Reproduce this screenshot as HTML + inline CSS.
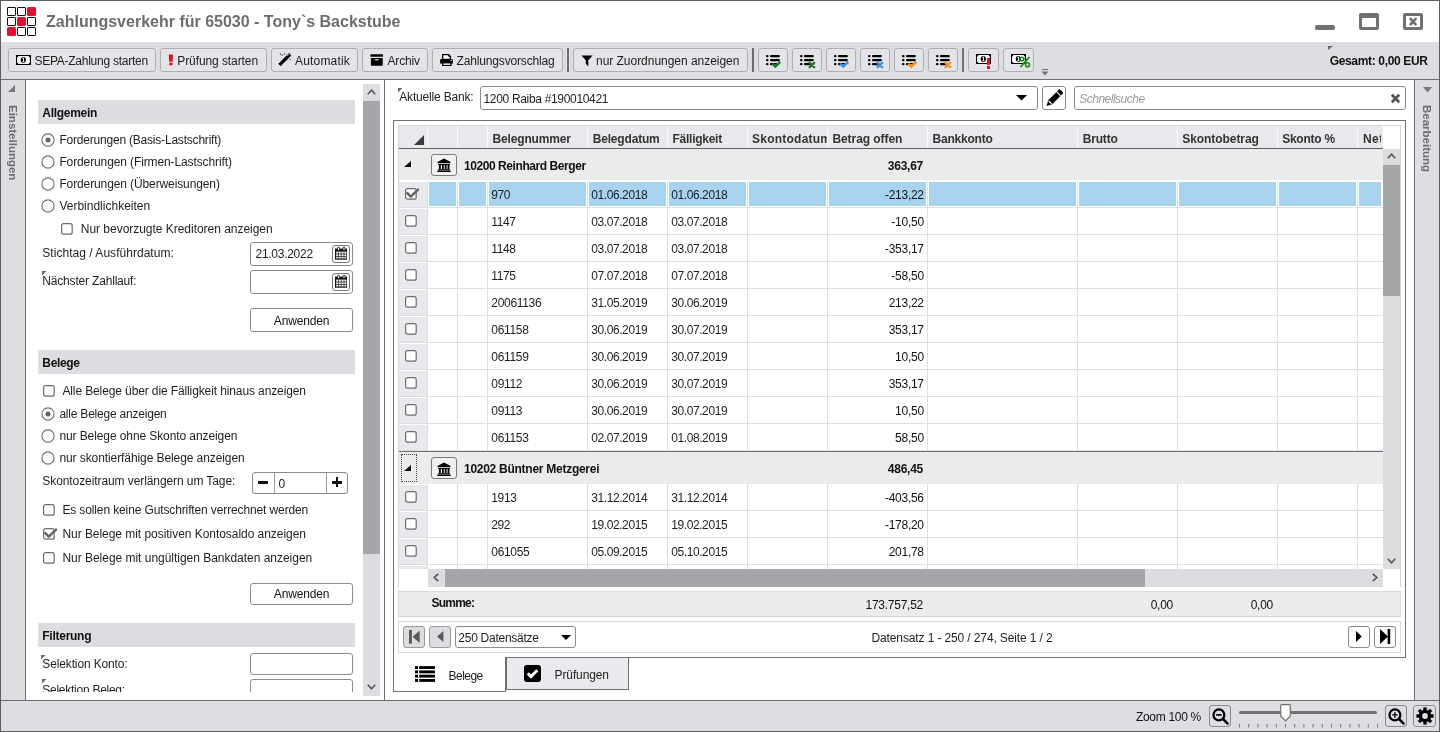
<!DOCTYPE html>
<html><head><meta charset="utf-8"><title>Zahlungsverkehr</title>
<style>
html,body{margin:0;padding:0;}
body{width:1440px;height:732px;position:relative;overflow:hidden;background:#fff;font-family:"Liberation Sans", sans-serif;}
.t{position:absolute;white-space:nowrap;font-size:12px;letter-spacing:-0.26px;line-height:14px;font-family:"Liberation Sans", sans-serif;}
svg{display:block;}
</style></head><body>
<div id="root" style="position:absolute;left:0;top:0;width:1440px;height:732px;overflow:hidden;will-change:transform;">
<div style="position:absolute;left:0px;top:0px;width:1440px;height:732px;background:#fff;"></div>
<div style="position:absolute;left:7px;top:7px;width:9px;height:9px;box-sizing:border-box;border:1.6px solid #111;background:#fff;border-radius:1px;"></div>
<div style="position:absolute;left:17px;top:7px;width:9px;height:9px;box-sizing:border-box;border:1.6px solid #111;background:#fff;border-radius:1px;"></div>
<div style="position:absolute;left:27px;top:7px;width:9px;height:9px;background:#e0102f;border-radius:1.5px;"></div>
<div style="position:absolute;left:7px;top:17px;width:9px;height:9px;box-sizing:border-box;border:1.6px solid #111;background:#fff;border-radius:1px;"></div>
<div style="position:absolute;left:17px;top:17px;width:9px;height:9px;background:#e0102f;border-radius:1.5px;"></div>
<div style="position:absolute;left:27px;top:17px;width:9px;height:9px;box-sizing:border-box;border:1.6px solid #111;background:#fff;border-radius:1px;"></div>
<div style="position:absolute;left:7px;top:27px;width:9px;height:9px;background:#e0102f;border-radius:1.5px;"></div>
<div style="position:absolute;left:17px;top:27px;width:9px;height:9px;box-sizing:border-box;border:1.6px solid #111;background:#fff;border-radius:1px;"></div>
<div style="position:absolute;left:27px;top:27px;width:9px;height:9px;box-sizing:border-box;border:1.6px solid #111;background:#fff;border-radius:1px;"></div>
<div class="t" style="left:46px;top:15.06px;font-size:16px;font-weight:bold;color:#6c6d70;letter-spacing:0px;">Zahlungsverkehr für 65030 - Tony`s Backstube</div>
<div style="position:absolute;left:1315px;top:25px;width:20px;height:5px;background:#707174;border-radius:2px;"></div>
<div style="position:absolute;left:1359px;top:13px;width:20px;height:17px;box-sizing:border-box;border:3px solid #707174;border-top-width:5px;border-radius:2px;"></div>
<div style="position:absolute;left:1403px;top:13px;width:20px;height:17px;box-sizing:border-box;border:3px solid #707174;border-radius:2px;"></div>
<svg style="position:absolute;left:1408px;top:17px" width="10" height="9" viewBox="0 0 10 9"><path d="M2.6 1.9 L7.6 7.3 M7.6 1.9 L2.6 7.3" stroke="#707174" stroke-width="2.7" stroke-linecap="round"/></svg>
<div style="position:absolute;left:0px;top:42px;width:1440px;height:37px;background:#dddee1;"></div>
<div style="position:absolute;left:0px;top:79px;width:1440px;height:1px;background:#6f7072;"></div>
<div style="position:absolute;left:8px;top:48px;width:148px;height:24px;box-sizing:border-box;border:1px solid #aeafb2;border-radius:3px;background:#e3e4e7;"></div>
<svg style="position:absolute;left:16px;top:55px" width="15" height="10" viewBox="0 0 15 10"><rect x="0" y="0" width="15" height="10" fill="#000"/><path d="M2.6 1.1 H12.4 L13.9 2.6 V7.4 L12.4 8.9 H2.6 L1.1 7.4 V2.6 Z" fill="#fff"/><ellipse cx="7.3" cy="4.9" rx="2.6" ry="2.9" fill="#000"/><path d="M6.3 3.4 L7.5 2.9 V6.6 M6.4 6.6 H8.5" stroke="#fff" stroke-width="0.9" fill="none"/></svg>
<div class="t" style="left:34.4px;top:53.84px;font-size:12px;color:#1e1e1e;letter-spacing:-0.253px;">SEPA-Zahlung starten</div>
<div style="position:absolute;left:160px;top:48px;width:107px;height:24px;box-sizing:border-box;border:1px solid #aeafb2;border-radius:3px;background:#e3e4e7;"></div>
<svg style="position:absolute;left:168px;top:53.5px" width="6" height="12" viewBox="0 0 6 12"><path d="M0.8 0.4 H5 L4.6 7.7 H1.2 Z" fill="#e0101f"/><rect x="1.3" y="8.7" width="3.2" height="2.6" fill="#d0101f"/></svg>
<div class="t" style="left:177.25px;top:53.84px;font-size:12px;color:#1e1e1e;letter-spacing:-0.087px;">Prüfung starten</div>
<div style="position:absolute;left:271px;top:48px;width:87px;height:24px;box-sizing:border-box;border:1px solid #aeafb2;border-radius:3px;background:#e3e4e7;"></div>
<svg style="position:absolute;left:278px;top:52px" width="14" height="14" viewBox="0 0 14 14"><path d="M2.6 11.8 L11 3.4" stroke="#000" stroke-width="3.3" stroke-linecap="square"/><path d="M9.3 3.9 L10.8 2.4" stroke="#fff" stroke-width="0.9"/><path d="M2.4 1.4 V2.8 M3.4 3 H5.2 M6.6 1.2 V2.4 M12.3 7 V8.2" stroke="#222" stroke-width="0.8"/></svg>
<div class="t" style="left:295px;top:53.84px;font-size:12px;color:#1e1e1e;letter-spacing:0.174px;">Automatik</div>
<div style="position:absolute;left:362px;top:48px;width:66px;height:24px;box-sizing:border-box;border:1px solid #aeafb2;border-radius:3px;background:#e3e4e7;"></div>
<svg style="position:absolute;left:370px;top:54px" width="13" height="12" viewBox="0 0 13 12"><rect x="0.4" y="0.2" width="12.6" height="2.6" rx="0.5" fill="#000"/><rect x="0.9" y="4" width="11.8" height="7.7" rx="0.4" fill="#000"/><rect x="4.8" y="5.2" width="4" height="1.1" rx="0.5" fill="#fff"/></svg>
<div class="t" style="left:387.5px;top:53.84px;font-size:12px;color:#1e1e1e;letter-spacing:-0.169px;">Archiv</div>
<div style="position:absolute;left:432px;top:48px;width:131px;height:24px;box-sizing:border-box;border:1px solid #aeafb2;border-radius:3px;background:#e3e4e7;"></div>
<svg style="position:absolute;left:440px;top:54px" width="13" height="12" viewBox="0 0 13 12"><path d="M2.7 0.7 H8.6 L10.4 2.5 V5.5 H2.7 Z" fill="#fff" stroke="#000" stroke-width="1.3"/><path d="M8.4 0.5 V2.8 H10.6 Z" fill="#000"/><rect x="0.1" y="5" width="12.8" height="4.7" rx="1" fill="#000"/><rect x="2.7" y="8.8" width="8.2" height="2.7" fill="#fff" stroke="#000" stroke-width="1.3"/><circle cx="11.3" cy="6.4" r="0.6" fill="#fff"/></svg>
<div class="t" style="left:456.5px;top:53.84px;font-size:12px;color:#1e1e1e;letter-spacing:-0.155px;">Zahlungsvorschlag</div>
<div style="position:absolute;left:567px;top:48px;width:2px;height:24px;background:#6f7072;"></div>
<div style="position:absolute;left:573px;top:48px;width:175px;height:24px;box-sizing:border-box;border:1px solid #aeafb2;border-radius:3px;background:#e3e4e7;"></div>
<svg style="position:absolute;left:580.5px;top:54.5px" width="12" height="12" viewBox="0 0 12 12"><path d="M0.4 0.4 H11.6 L7.3 5.2 V11.6 L4.8 8.6 V5.2 Z" fill="#000"/></svg>
<div class="t" style="left:596px;top:53.84px;font-size:12px;color:#1e1e1e;letter-spacing:-0.032px;">nur Zuordnungen anzeigen</div>
<div style="position:absolute;left:752px;top:48px;width:2px;height:24px;background:#6f7072;"></div>
<div style="position:absolute;left:758px;top:48px;width:30px;height:24px;box-sizing:border-box;border:1px solid #aeafb2;border-radius:3px;background:#e3e4e7;"></div>
<svg style="position:absolute;left:766px;top:54px" width="18" height="16" viewBox="0 0 18 16"><rect x="0" y="1" width="2.5" height="2.2" rx="1" fill="#000"/><rect x="4" y="1" width="9.8" height="2.2" rx="1" fill="#000"/><rect x="0" y="5" width="2.5" height="2.2" rx="1" fill="#000"/><rect x="4" y="5" width="9.8" height="2.2" rx="1" fill="#000"/><rect x="0" y="9" width="2.5" height="2.2" rx="1" fill="#000"/><rect x="4" y="9" width="7" height="2.2" rx="1" fill="#000"/><path d="M6.3 9.6 L9.3 12.6 L14.3 7.9" stroke="#1f7a1f" stroke-width="2.4" fill="none" stroke-linejoin="miter"/><path d="M7 10 L9.3 13.2 L12.5 10 Z" fill="#1f7a1f"/></svg>
<div style="position:absolute;left:792px;top:48px;width:30px;height:24px;box-sizing:border-box;border:1px solid #aeafb2;border-radius:3px;background:#e3e4e7;"></div>
<svg style="position:absolute;left:800px;top:54px" width="18" height="16" viewBox="0 0 18 16"><rect x="0" y="1" width="2.5" height="2.2" rx="1" fill="#000"/><rect x="4" y="1" width="9.8" height="2.2" rx="1" fill="#000"/><rect x="0" y="5" width="2.5" height="2.2" rx="1" fill="#000"/><rect x="4" y="5" width="9.8" height="2.2" rx="1" fill="#000"/><rect x="0" y="9" width="2.5" height="2.2" rx="1" fill="#000"/><rect x="4" y="9" width="7" height="2.2" rx="1" fill="#000"/><path d="M9.6 8.9 L14.2 13.2 M14.2 8.9 L9.6 13.2" stroke="#1f7a1f" stroke-width="2.3" stroke-linecap="round"/></svg>
<div style="position:absolute;left:826px;top:48px;width:30px;height:24px;box-sizing:border-box;border:1px solid #aeafb2;border-radius:3px;background:#e3e4e7;"></div>
<svg style="position:absolute;left:834px;top:54px" width="18" height="16" viewBox="0 0 18 16"><rect x="0" y="1" width="2.5" height="2.2" rx="1" fill="#000"/><rect x="4" y="1" width="9.8" height="2.2" rx="1" fill="#000"/><rect x="0" y="5" width="2.5" height="2.2" rx="1" fill="#000"/><rect x="4" y="5" width="9.8" height="2.2" rx="1" fill="#000"/><rect x="0" y="9" width="2.5" height="2.2" rx="1" fill="#000"/><rect x="4" y="9" width="7" height="2.2" rx="1" fill="#000"/><path d="M6.3 9.6 L9.3 12.6 L14.3 7.9" stroke="#3b8ee8" stroke-width="2.4" fill="none" stroke-linejoin="miter"/><path d="M7 10 L9.3 13.2 L12.5 10 Z" fill="#3b8ee8"/></svg>
<div style="position:absolute;left:860px;top:48px;width:30px;height:24px;box-sizing:border-box;border:1px solid #aeafb2;border-radius:3px;background:#e3e4e7;"></div>
<svg style="position:absolute;left:868px;top:54px" width="18" height="16" viewBox="0 0 18 16"><rect x="0" y="1" width="2.5" height="2.2" rx="1" fill="#000"/><rect x="4" y="1" width="9.8" height="2.2" rx="1" fill="#000"/><rect x="0" y="5" width="2.5" height="2.2" rx="1" fill="#000"/><rect x="4" y="5" width="9.8" height="2.2" rx="1" fill="#000"/><rect x="0" y="9" width="2.5" height="2.2" rx="1" fill="#000"/><rect x="4" y="9" width="7" height="2.2" rx="1" fill="#000"/><path d="M9.6 8.9 L14.2 13.2 M14.2 8.9 L9.6 13.2" stroke="#3b8ee8" stroke-width="2.3" stroke-linecap="round"/></svg>
<div style="position:absolute;left:894px;top:48px;width:30px;height:24px;box-sizing:border-box;border:1px solid #aeafb2;border-radius:3px;background:#e3e4e7;"></div>
<svg style="position:absolute;left:902px;top:54px" width="18" height="16" viewBox="0 0 18 16"><rect x="0" y="1" width="2.5" height="2.2" rx="1" fill="#000"/><rect x="4" y="1" width="9.8" height="2.2" rx="1" fill="#000"/><rect x="0" y="5" width="2.5" height="2.2" rx="1" fill="#000"/><rect x="4" y="5" width="9.8" height="2.2" rx="1" fill="#000"/><rect x="0" y="9" width="2.5" height="2.2" rx="1" fill="#000"/><rect x="4" y="9" width="7" height="2.2" rx="1" fill="#000"/><path d="M6.3 9.6 L9.3 12.6 L14.3 7.9" stroke="#f0901e" stroke-width="2.4" fill="none" stroke-linejoin="miter"/><path d="M7 10 L9.3 13.2 L12.5 10 Z" fill="#f0901e"/></svg>
<div style="position:absolute;left:928px;top:48px;width:30px;height:24px;box-sizing:border-box;border:1px solid #aeafb2;border-radius:3px;background:#e3e4e7;"></div>
<svg style="position:absolute;left:936px;top:54px" width="18" height="16" viewBox="0 0 18 16"><rect x="0" y="1" width="2.5" height="2.2" rx="1" fill="#000"/><rect x="4" y="1" width="9.8" height="2.2" rx="1" fill="#000"/><rect x="0" y="5" width="2.5" height="2.2" rx="1" fill="#000"/><rect x="4" y="5" width="9.8" height="2.2" rx="1" fill="#000"/><rect x="0" y="9" width="2.5" height="2.2" rx="1" fill="#000"/><rect x="4" y="9" width="7" height="2.2" rx="1" fill="#000"/><path d="M9.6 8.9 L14.2 13.2 M14.2 8.9 L9.6 13.2" stroke="#f0901e" stroke-width="2.3" stroke-linecap="round"/></svg>
<div style="position:absolute;left:962px;top:48px;width:2px;height:24px;background:#6f7072;"></div>
<div style="position:absolute;left:968px;top:48px;width:31px;height:24px;box-sizing:border-box;border:1px solid #aeafb2;border-radius:3px;background:#e3e4e7;"></div>
<svg style="position:absolute;left:976px;top:54px" width="15" height="10" viewBox="0 0 15 10"><rect x="0" y="0" width="15" height="10" fill="#000"/><path d="M2.6 1.1 H12.4 L13.9 2.6 V7.4 L12.4 8.9 H2.6 L1.1 7.4 V2.6 Z" fill="#fff"/><ellipse cx="7.3" cy="4.9" rx="2.6" ry="2.9" fill="#000"/><path d="M6.3 3.4 L7.5 2.9 V6.6 M6.4 6.6 H8.5" stroke="#fff" stroke-width="0.9" fill="none"/></svg>
<div style="position:absolute;left:986.5px;top:58px;width:3.5px;height:6.5px;background:#e8102a;"></div>
<div style="position:absolute;left:987px;top:66px;width:3px;height:2.5px;background:#e8102a;"></div>
<div style="position:absolute;left:1003px;top:48px;width:31px;height:24px;box-sizing:border-box;border:1px solid #aeafb2;border-radius:3px;background:#e3e4e7;"></div>
<svg style="position:absolute;left:1011px;top:54px" width="15" height="10" viewBox="0 0 15 10"><rect x="0" y="0" width="15" height="10" fill="#000"/><path d="M2.6 1.1 H12.4 L13.9 2.6 V7.4 L12.4 8.9 H2.6 L1.1 7.4 V2.6 Z" fill="#fff"/><ellipse cx="7.3" cy="4.9" rx="2.6" ry="2.9" fill="#000"/><path d="M6.3 3.4 L7.5 2.9 V6.6 M6.4 6.6 H8.5" stroke="#fff" stroke-width="0.9" fill="none"/></svg>
<svg style="position:absolute;left:1019px;top:56px" width="12" height="12" viewBox="0 0 12 12"><path d="M1.5 11 L10.5 1" stroke="#1a8a1a" stroke-width="1.8"/><circle cx="3" cy="3" r="1.8" fill="none" stroke="#1a8a1a" stroke-width="1.5"/><circle cx="8.5" cy="8.8" r="2" fill="none" stroke="#1a8a1a" stroke-width="1.6"/></svg>
<div style="position:absolute;left:1042px;top:69px;width:6px;height:1.2px;background:#707174;"></div>
<svg style="position:absolute;left:1041px;top:71px" width="8" height="5" viewBox="0 0 8 5"><path d="M0.5 0.5 H7.5 L4 4.5 Z" fill="#707174"/></svg>
<svg style="position:absolute;left:1328px;top:46px" width="5" height="4" viewBox="0 0 5 4"><path d="M0 0 H5 L0 4 Z" fill="#6a6a6a"/></svg>
<div class="t" style="left:1329.7px;top:53.84px;font-size:12px;font-weight:bold;color:#111;letter-spacing:-0.339px;">Gesamt: 0,00 EUR</div>
<div style="position:absolute;left:0px;top:80px;width:25px;height:620px;background:#dddee1;"></div>
<div style="position:absolute;left:25px;top:80px;width:1px;height:620px;background:#6f7072;"></div>
<svg style="position:absolute;left:8px;top:85px" width="7" height="7" viewBox="0 0 7 7"><path d="M7 0 V7 H0 Z" fill="#77787b"/></svg>
<div class="t" style="left:17.8px;top:104.5px;font-size:11.5px;font-weight:bold;color:#6c6d70;transform-origin:0 0;transform:rotate(90deg);line-height:11px;letter-spacing:0px;">Einstellungen</div>
<div style="position:absolute;left:38px;top:100px;width:317px;height:24px;background:#dcdde1;"></div>
<div class="t" style="left:42.3px;top:105.64px;font-size:12px;font-weight:bold;color:#111;letter-spacing:-0.299px;">Allgemein</div>
<svg style="position:absolute;left:41.3px;top:132.5px" width="14" height="14" viewBox="0 0 14 14"><circle cx="7" cy="7" r="6.1" fill="#fff" stroke="#6e6e6e" stroke-width="1.1"/><circle cx="7" cy="7" r="2.5" fill="#666"/></svg>
<div class="t" style="left:59.4px;top:132.84px;font-size:12px;color:#1e1e1e;letter-spacing:-0.203px;">Forderungen (Basis-Lastschrift)</div>
<svg style="position:absolute;left:41.3px;top:154.5px" width="14" height="14" viewBox="0 0 14 14"><circle cx="7" cy="7" r="6.1" fill="#fff" stroke="#6e6e6e" stroke-width="1.1"/></svg>
<div class="t" style="left:59.4px;top:154.84px;font-size:12px;color:#1e1e1e;letter-spacing:-0.115px;">Forderungen (Firmen-Lastschrift)</div>
<svg style="position:absolute;left:41.3px;top:176.5px" width="14" height="14" viewBox="0 0 14 14"><circle cx="7" cy="7" r="6.1" fill="#fff" stroke="#6e6e6e" stroke-width="1.1"/></svg>
<div class="t" style="left:59.4px;top:176.84px;font-size:12px;color:#1e1e1e;letter-spacing:-0.113px;">Forderungen (Überweisungen)</div>
<svg style="position:absolute;left:41.3px;top:198.5px" width="14" height="14" viewBox="0 0 14 14"><circle cx="7" cy="7" r="6.1" fill="#fff" stroke="#6e6e6e" stroke-width="1.1"/></svg>
<div class="t" style="left:59.4px;top:198.64px;font-size:12px;color:#1e1e1e;letter-spacing:0.004px;">Verbindlichkeiten</div>
<svg style="position:absolute;left:60px;top:221.6px" width="16.8" height="13.8" viewBox="0 0 16.8 13.8"><rect x="1.6" y="1.6" width="10.600000000000001" height="10.600000000000001" rx="2" fill="#fff" stroke="#6c6c6c" stroke-width="1.2"/></svg>
<div class="t" style="left:80.8px;top:221.54px;font-size:12px;color:#1e1e1e;letter-spacing:-0.027px;">Nur bevorzugte Kreditoren anzeigen</div>
<div class="t" style="left:42.3px;top:245.94px;font-size:12px;color:#1e1e1e;letter-spacing:0.033px;">Stichtag / Ausführdatum:</div>
<div style="position:absolute;left:250px;top:242px;width:103px;height:24px;box-sizing:border-box;border:1px solid #8c8c8c;border-radius:3px;background:#fff;"></div>
<div class="t" style="left:255.5px;top:247.44px;font-size:12px;color:#1e1e1e;letter-spacing:-0.278px;">21.03.2022</div>
<div style="position:absolute;left:332px;top:245px;width:18px;height:18px;box-sizing:border-box;border:1px solid #777;border-radius:3px;background:#fff;"></div>
<svg style="position:absolute;left:334.8px;top:246.2px" width="12.5" height="13.5" viewBox="0 0 12.5 13.5"><rect x="0.6" y="3.2" width="11.3" height="9.9" fill="#fff" stroke="#111" stroke-width="1.2"/><rect x="0.6" y="3" width="11.3" height="2.6" fill="#111"/><rect x="2.5" y="1.2" width="2" height="3.4" rx="1" fill="#fff" stroke="#111" stroke-width="0.9"/><rect x="8" y="1.2" width="2" height="3.4" rx="1" fill="#fff" stroke="#111" stroke-width="0.9"/><path d="M1 8 H11.5 M1 10.5 H11.5 M3.4 5.5 V13 M6.2 5.5 V13 M9 5.5 V13" stroke="#222" stroke-width="0.75"/></svg>
<svg style="position:absolute;left:42px;top:271px" width="5" height="5" viewBox="0 0 5 5"><path d="M0 0 H4.5 L0 4.5 Z" fill="#6a6a6a"/></svg>
<div class="t" style="left:42.3px;top:273.84px;font-size:12px;color:#1e1e1e;letter-spacing:-0.182px;">Nächster Zahllauf:</div>
<div style="position:absolute;left:250px;top:270px;width:103px;height:24px;box-sizing:border-box;border:1px solid #8c8c8c;border-radius:3px;background:#fff;"></div>
<div style="position:absolute;left:332px;top:273px;width:18px;height:18px;box-sizing:border-box;border:1px solid #777;border-radius:3px;background:#fff;"></div>
<svg style="position:absolute;left:334.8px;top:274.2px" width="12.5" height="13.5" viewBox="0 0 12.5 13.5"><rect x="0.6" y="3.2" width="11.3" height="9.9" fill="#fff" stroke="#111" stroke-width="1.2"/><rect x="0.6" y="3" width="11.3" height="2.6" fill="#111"/><rect x="2.5" y="1.2" width="2" height="3.4" rx="1" fill="#fff" stroke="#111" stroke-width="0.9"/><rect x="8" y="1.2" width="2" height="3.4" rx="1" fill="#fff" stroke="#111" stroke-width="0.9"/><path d="M1 8 H11.5 M1 10.5 H11.5 M3.4 5.5 V13 M6.2 5.5 V13 M9 5.5 V13" stroke="#222" stroke-width="0.75"/></svg>
<div style="position:absolute;left:250px;top:308px;width:103px;height:24px;box-sizing:border-box;border:1px solid #8c8c8c;border-radius:3px;background:#fff;"></div>
<div class="t" style="left:273.8px;top:313.84px;font-size:12px;color:#111;letter-spacing:-0.160px;">Anwenden</div>
<div style="position:absolute;left:38px;top:350px;width:317px;height:24px;background:#dcdde1;"></div>
<div class="t" style="left:42.3px;top:355.64px;font-size:12px;font-weight:bold;color:#111;letter-spacing:-0.328px;">Belege</div>
<svg style="position:absolute;left:41.9px;top:383.5px" width="16.8" height="13.8" viewBox="0 0 16.8 13.8"><rect x="1.6" y="1.6" width="10.600000000000001" height="10.600000000000001" rx="2" fill="#fff" stroke="#6c6c6c" stroke-width="1.2"/></svg>
<div class="t" style="left:62.4px;top:383.84px;font-size:12px;color:#1e1e1e;letter-spacing:-0.114px;">Alle Belege über die Fälligkeit hinaus anzeigen</div>
<svg style="position:absolute;left:41.3px;top:406.8px" width="14" height="14" viewBox="0 0 14 14"><circle cx="7" cy="7" r="6.1" fill="#fff" stroke="#6e6e6e" stroke-width="1.1"/><circle cx="7" cy="7" r="2.5" fill="#666"/></svg>
<div class="t" style="left:59.4px;top:406.74px;font-size:12px;color:#1e1e1e;letter-spacing:-0.212px;">alle Belege anzeigen</div>
<svg style="position:absolute;left:41.3px;top:428.8px" width="14" height="14" viewBox="0 0 14 14"><circle cx="7" cy="7" r="6.1" fill="#fff" stroke="#6e6e6e" stroke-width="1.1"/></svg>
<div class="t" style="left:59.4px;top:428.74px;font-size:12px;color:#1e1e1e;letter-spacing:-0.094px;">nur Belege ohne Skonto anzeigen</div>
<svg style="position:absolute;left:41.3px;top:450.6px" width="14" height="14" viewBox="0 0 14 14"><circle cx="7" cy="7" r="6.1" fill="#fff" stroke="#6e6e6e" stroke-width="1.1"/></svg>
<div class="t" style="left:59.4px;top:450.54px;font-size:12px;color:#1e1e1e;letter-spacing:-0.086px;">nur skontierfähige Belege anzeigen</div>
<div class="t" style="left:42.3px;top:473.84px;font-size:12px;color:#1e1e1e;letter-spacing:-0.085px;">Skontozeitraum verlängern um Tage:</div>
<div style="position:absolute;left:252px;top:472px;width:96px;height:21.5px;box-sizing:border-box;border:1px solid #8c8c8c;border-radius:3px;background:#fff;"></div>
<div style="position:absolute;left:274px;top:473px;width:1px;height:20px;background:#9a9a9a;"></div>
<div style="position:absolute;left:325.5px;top:473px;width:1px;height:20px;background:#9a9a9a;"></div>
<div style="position:absolute;left:258.3px;top:481.3px;width:9.8px;height:2.4px;background:#111;"></div>
<div style="position:absolute;left:332.3px;top:481.3px;width:9.8px;height:2.4px;background:#111;"></div>
<div style="position:absolute;left:336px;top:477.4px;width:2.4px;height:9.8px;background:#111;"></div>
<div class="t" style="left:278.6px;top:476.84px;font-size:12px;color:#1e1e1e;letter-spacing:0px;">0</div>
<svg style="position:absolute;left:41.9px;top:503px" width="16.8" height="13.8" viewBox="0 0 16.8 13.8"><rect x="1.6" y="1.6" width="10.600000000000001" height="10.600000000000001" rx="2" fill="#fff" stroke="#6c6c6c" stroke-width="1.2"/></svg>
<div class="t" style="left:62.4px;top:502.84px;font-size:12px;color:#1e1e1e;letter-spacing:-0.124px;">Es sollen keine Gutschriften verrechnet werden</div>
<svg style="position:absolute;left:41.9px;top:527px" width="16.8" height="13.8" viewBox="0 0 16.8 13.8"><rect x="1.6" y="1.6" width="10.600000000000001" height="10.600000000000001" rx="2" fill="#fff" stroke="#6c6c6c" stroke-width="1.2"/><path d="M3.4 6.2 L6.8 9.6 L14 2.6" stroke="#666" stroke-width="2.6" fill="none" stroke-linecap="round" stroke-linejoin="round"/></svg>
<div class="t" style="left:62.4px;top:526.64px;font-size:12px;color:#1e1e1e;letter-spacing:-0.044px;">Nur Belege mit positiven Kontosaldo anzeigen</div>
<svg style="position:absolute;left:41.9px;top:550.5px" width="16.8" height="13.8" viewBox="0 0 16.8 13.8"><rect x="1.6" y="1.6" width="10.600000000000001" height="10.600000000000001" rx="2" fill="#fff" stroke="#6c6c6c" stroke-width="1.2"/></svg>
<div class="t" style="left:62.4px;top:550.94px;font-size:12px;color:#1e1e1e;letter-spacing:-0.024px;">Nur Belege mit ungültigen Bankdaten anzeigen</div>
<div style="position:absolute;left:250px;top:582.5px;width:103px;height:22.5px;box-sizing:border-box;border:1px solid #8c8c8c;border-radius:3px;background:#fff;"></div>
<div class="t" style="left:273.8px;top:586.84px;font-size:12px;color:#111;letter-spacing:-0.146px;">Anwenden</div>
<div style="position:absolute;left:38px;top:623px;width:317px;height:24px;background:#dcdde1;"></div>
<div class="t" style="left:42.3px;top:628.64px;font-size:12px;font-weight:bold;color:#111;letter-spacing:-0.266px;">Filterung</div>
<svg style="position:absolute;left:41.3px;top:654.6px" width="5" height="5" viewBox="0 0 5 5"><path d="M0 0 H4.5 L0 4.5 Z" fill="#6a6a6a"/></svg>
<div class="t" style="left:42.3px;top:656.84px;font-size:12px;color:#1e1e1e;letter-spacing:-0.134px;">Selektion Konto:</div>
<div style="position:absolute;left:250px;top:653px;width:103px;height:22px;box-sizing:border-box;border:1px solid #8c8c8c;border-radius:3px;background:#fff;"></div>
<div style="position:absolute;left:26px;top:676px;width:337px;height:16px;overflow:hidden;">
<div style="position:absolute;left:16px;top:3px;width:5px;height:5px;"><svg width="5" height="5" viewBox="0 0 5 5"><path d="M0 0 H4.5 L0 4.5 Z" fill="#6a6a6a"/></svg></div>
<div class="t" style="left:16.3px;top:7px;color:#1e1e1e;">Selektion Beleg:</div>
<div style="position:absolute;left:224px;top:3px;width:103px;height:24px;box-sizing:border-box;border:1px solid #8c8c8c;border-radius:3px;"></div>
</div>
<div style="position:absolute;left:363px;top:84px;width:17px;height:612px;background:#dcdde0;"></div>
<div style="position:absolute;left:363px;top:101px;width:17px;height:453px;background:#a5a6a9;"></div>
<svg style="position:absolute;left:367px;top:89px" width="9" height="6" viewBox="0 0 9 6"><path d="M0.8 5.2 L4.5 1.2 L8.2 5.2" stroke="#555" stroke-width="1.6" fill="none"/></svg>
<svg style="position:absolute;left:367px;top:684px" width="9" height="6" viewBox="0 0 9 6"><path d="M0.8 0.8 L4.5 4.8 L8.2 0.8" stroke="#555" stroke-width="1.6" fill="none"/></svg>
<div style="position:absolute;left:384px;top:80px;width:1px;height:620px;background:#6f7072;"></div>
<div style="position:absolute;left:1414px;top:80px;width:1px;height:620px;background:#6f7072;"></div>
<div style="position:absolute;left:1415px;top:80px;width:24px;height:620px;background:#dddee1;"></div>
<svg style="position:absolute;left:1423px;top:86.5px" width="9" height="6" viewBox="0 0 9 6"><path d="M0 0 H9 L4.5 5.5 Z" fill="#77787b"/></svg>
<div class="t" style="left:1432px;top:104.5px;font-size:11.5px;font-weight:bold;color:#6c6d70;transform-origin:0 0;transform:rotate(90deg);line-height:11px;letter-spacing:0px;">Bearbeitung</div>
<div style="position:absolute;left:0px;top:700px;width:1440px;height:1px;background:#6f7072;"></div>
<div style="position:absolute;left:0px;top:701px;width:1440px;height:31px;background:#dddee1;"></div>
<div class="t" style="left:1136px;top:709.84px;font-size:12px;color:#111;letter-spacing:-0.316px;">Zoom 100 %</div>
<div style="position:absolute;left:1209.2px;top:705.2px;width:21.5px;height:21.5px;box-sizing:border-box;border:1px solid #8c8c8c;border-radius:3px;background:#dddee1;"></div>
<svg style="position:absolute;left:1211.5px;top:708.3px" width="17" height="17" viewBox="0 0 16 16"><circle cx="6.5" cy="6.5" r="5.1" fill="none" stroke="#000" stroke-width="2.1"/><path d="M10.2 10.2 L14.6 14.6" stroke="#000" stroke-width="2.4" stroke-linecap="round"/><path d="M3.9 6.5 H9.1" stroke="#000" stroke-width="1.6"/></svg>
<div style="position:absolute;left:1239px;top:710.5px;width:138px;height:3px;background:#707174;border-radius:1.5px;"></div>
<svg style="position:absolute;left:1279.5px;top:703.5px" width="11" height="18" viewBox="0 0 11 18"><path d="M0.7 1.5 Q0.7 0.7 1.5 0.7 H9.5 Q10.3 0.7 10.3 1.5 V12 L5.5 17 L0.7 12 Z" fill="#fff" stroke="#707174" stroke-width="1.2"/></svg>
<svg style="position:absolute;left:1238.5px;top:723.5px" width="141" height="4"><rect x="0.0" y="0" width="1" height="3.5" fill="#777"/><rect x="9.2" y="0" width="1" height="3.5" fill="#777"/><rect x="18.4" y="0" width="1" height="3.5" fill="#777"/><rect x="27.6" y="0" width="1" height="3.5" fill="#777"/><rect x="36.8" y="0" width="1" height="3.5" fill="#777"/><rect x="46.0" y="0" width="1" height="3.5" fill="#777"/><rect x="55.2" y="0" width="1" height="3.5" fill="#777"/><rect x="64.4" y="0" width="1" height="3.5" fill="#777"/><rect x="73.6" y="0" width="1" height="3.5" fill="#777"/><rect x="82.8" y="0" width="1" height="3.5" fill="#777"/><rect x="92.0" y="0" width="1" height="3.5" fill="#777"/><rect x="101.2" y="0" width="1" height="3.5" fill="#777"/><rect x="110.4" y="0" width="1" height="3.5" fill="#777"/><rect x="119.6" y="0" width="1" height="3.5" fill="#777"/><rect x="128.8" y="0" width="1" height="3.5" fill="#777"/><rect x="138.0" y="0" width="1" height="3.5" fill="#777"/></svg>
<div style="position:absolute;left:1385.2px;top:705.2px;width:21.5px;height:21.5px;box-sizing:border-box;border:1px solid #8c8c8c;border-radius:3px;background:#dddee1;"></div>
<svg style="position:absolute;left:1387.5px;top:708.3px" width="17" height="17" viewBox="0 0 16 16"><circle cx="6.5" cy="6.5" r="5.1" fill="none" stroke="#000" stroke-width="2.1"/><path d="M10.2 10.2 L14.6 14.6" stroke="#000" stroke-width="2.4" stroke-linecap="round"/><path d="M3.9 6.5 H9.1 M6.5 3.9 V9.1" stroke="#000" stroke-width="1.3"/></svg>
<div style="position:absolute;left:1413.2px;top:705.2px;width:22.5px;height:21.5px;box-sizing:border-box;border:1px solid #8c8c8c;border-radius:3px;background:#dddee1;"></div>
<svg style="position:absolute;left:1415.5px;top:707px" width="18" height="18" viewBox="-9 -9 18 18"><g fill="#000"><circle r="6.2"/><rect x="-1.7" y="-8.6" width="3.4" height="4" transform="rotate(0)"/><rect x="-1.7" y="-8.6" width="3.4" height="4" transform="rotate(45)"/><rect x="-1.7" y="-8.6" width="3.4" height="4" transform="rotate(90)"/><rect x="-1.7" y="-8.6" width="3.4" height="4" transform="rotate(135)"/><rect x="-1.7" y="-8.6" width="3.4" height="4" transform="rotate(180)"/><rect x="-1.7" y="-8.6" width="3.4" height="4" transform="rotate(225)"/><rect x="-1.7" y="-8.6" width="3.4" height="4" transform="rotate(270)"/><rect x="-1.7" y="-8.6" width="3.4" height="4" transform="rotate(315)"/></g><circle r="2.9" fill="#dddee1"/></svg>
<svg style="position:absolute;left:398px;top:88px" width="5" height="5" viewBox="0 0 5 5"><path d="M0 0 H4.5 L0 4.5 Z" fill="#6a6a6a"/></svg>
<div class="t" style="left:399.3px;top:89.74px;font-size:12px;color:#1e1e1e;letter-spacing:-0.178px;">Aktuelle Bank:</div>
<div style="position:absolute;left:480px;top:86px;width:558px;height:24px;box-sizing:border-box;border:1px solid #8c8c8c;border-radius:3px;background:#fff;"></div>
<div class="t" style="left:483.5px;top:91.74px;font-size:12px;color:#1e1e1e;letter-spacing:-0.323px;">1200 Raiba #190010421</div>
<svg style="position:absolute;left:1016px;top:95px" width="11" height="6" viewBox="0 0 11 6"><path d="M0 0 H11 L5.5 5.5 Z" fill="#000"/></svg>
<div style="position:absolute;left:1042px;top:86px;width:24px;height:24px;box-sizing:border-box;border:1px solid #8c8c8c;border-radius:3px;background:#fff;"></div>
<svg style="position:absolute;left:1045.5px;top:89.2px" width="17.5" height="17.5" viewBox="0 0 17 17"><path d="M12.6 0.6 Q13.2 0.1 13.8 0.6 L16.4 3.2 Q16.9 3.8 16.4 4.4 L6 14.8 L0.6 16.4 L2.2 11 Z" fill="#000"/><path d="M10.4 2.8 L14.2 6.6" stroke="#fff" stroke-width="1.1"/><path d="M2.6 11.6 L5.4 14.4" stroke="#fff" stroke-width="1.3"/></svg>
<div style="position:absolute;left:1074px;top:86px;width:332px;height:24px;box-sizing:border-box;border:1px solid #8c8c8c;border-radius:3px;background:#fff;"></div>
<div class="t" style="left:1079.3px;top:91.84px;font-size:12px;color:#9a9a9a;letter-spacing:-0.508px;font-style:italic;">Schnellsuche</div>
<svg style="position:absolute;left:1389.5px;top:93px" width="11" height="11" viewBox="0 0 11 11"><path d="M1.8 1.8 L9.2 9.2 M9.2 1.8 L1.8 9.2" stroke="#555" stroke-width="2.7"/></svg>
<div style="position:absolute;left:393px;top:120px;width:1013px;height:537.5px;box-sizing:border-box;border:1.3px solid #6f7072;"></div>
<div style="position:absolute;left:398px;top:125px;width:1003px;height:462px;box-sizing:border-box;border:1px solid #d5d5d5;background:#fff;"></div>
<div style="position:absolute;left:399px;top:125.5px;width:984px;height:22.5px;background:#e8e9ec;"></div>
<div style="position:absolute;left:427px;top:126px;width:1.3px;height:22px;background:#fbfbfc;"></div>
<div style="position:absolute;left:457px;top:126px;width:1.3px;height:22px;background:#fbfbfc;"></div>
<div style="position:absolute;left:487px;top:126px;width:1.3px;height:22px;background:#fbfbfc;"></div>
<div style="position:absolute;left:587px;top:126px;width:1.3px;height:22px;background:#fbfbfc;"></div>
<div style="position:absolute;left:667px;top:126px;width:1.3px;height:22px;background:#fbfbfc;"></div>
<div style="position:absolute;left:747px;top:126px;width:1.3px;height:22px;background:#fbfbfc;"></div>
<div style="position:absolute;left:827px;top:126px;width:1.3px;height:22px;background:#fbfbfc;"></div>
<div style="position:absolute;left:927px;top:126px;width:1.3px;height:22px;background:#fbfbfc;"></div>
<div style="position:absolute;left:1077px;top:126px;width:1.3px;height:22px;background:#fbfbfc;"></div>
<div style="position:absolute;left:1177px;top:126px;width:1.3px;height:22px;background:#fbfbfc;"></div>
<div style="position:absolute;left:1277px;top:126px;width:1.3px;height:22px;background:#fbfbfc;"></div>
<div style="position:absolute;left:1357px;top:126px;width:1.3px;height:22px;background:#fbfbfc;"></div>
<div style="position:absolute;left:399px;top:147.5px;width:984px;height:1.4px;background:#5f6063;"></div>
<svg style="position:absolute;left:414px;top:135px" width="10" height="10" viewBox="0 0 10 10"><path d="M10 0 V10 H0 Z" fill="#3a3a3a"/></svg>
<div class="t" style="left:492.6px;top:132px;font-weight:bold;color:#333;width:93.89999999999998px;overflow:hidden;letter-spacing:-0.163px;">Belegnummer</div>
<div class="t" style="left:592.7px;top:132px;font-weight:bold;color:#333;width:73.79999999999995px;overflow:hidden;letter-spacing:-0.176px;">Belegdatum</div>
<div class="t" style="left:672.5px;top:132px;font-weight:bold;color:#333;width:74.0px;overflow:hidden;">Fälligkeit</div>
<div class="t" style="left:752px;top:132px;font-weight:bold;color:#333;width:74.5px;overflow:hidden;letter-spacing:0.233px;">Skontodatum</div>
<div class="t" style="left:832.4px;top:132px;font-weight:bold;color:#333;width:94.10000000000002px;overflow:hidden;letter-spacing:-0.061px;">Betrag offen</div>
<div class="t" style="left:932.5px;top:132px;font-weight:bold;color:#333;width:144.0px;overflow:hidden;letter-spacing:-0.214px;">Bankkonto</div>
<div class="t" style="left:1082.7px;top:132px;font-weight:bold;color:#333;width:93.79999999999995px;overflow:hidden;letter-spacing:-0.180px;">Brutto</div>
<div class="t" style="left:1182.2px;top:132px;font-weight:bold;color:#333;width:94.29999999999995px;overflow:hidden;letter-spacing:-0.059px;">Skontobetrag</div>
<div class="t" style="left:1282.2px;top:132px;font-weight:bold;color:#333;width:74.29999999999995px;overflow:hidden;letter-spacing:-0.253px;">Skonto %</div>
<div class="t" style="left:1362.9px;top:132px;font-weight:bold;color:#333;width:18.59999999999991px;overflow:hidden;letter-spacing:0.478px;">Net</div>
<div style="position:absolute;left:1383px;top:125.5px;width:17px;height:22.5px;background:#fff;"></div>
<div style="position:absolute;left:399px;top:148.9px;width:984px;height:31.5px;background:#ebebeb;"></div>
<svg style="position:absolute;left:404px;top:161.4px" width="7" height="6" viewBox="0 0 7 6"><path d="M7 0 V6 H0 Z" fill="#111"/></svg>
<div style="position:absolute;left:431.3px;top:154.20000000000002px;width:25.5px;height:21.5px;box-sizing:border-box;border:1px solid #7a7a7a;border-radius:3px;background:#f1f1f1;"></div>
<svg style="position:absolute;left:436.5px;top:158.4px" width="14" height="14" viewBox="0 0 14 14"><path d="M7 0.5 L13.5 4 V5 H0.5 V4 Z" fill="#000"/><rect x="1" y="5.8" width="12" height="1.2" fill="#000"/><rect x="2" y="7" width="1.8" height="4" fill="#000"/><rect x="5" y="7" width="1.8" height="4" fill="#000"/><rect x="7.8" y="7" width="1.8" height="4" fill="#000"/><rect x="10.6" y="7" width="1.8" height="4" fill="#000"/><rect x="1" y="11.2" width="12" height="1.2" fill="#000"/><rect x="0.3" y="12.6" width="13.4" height="1.4" fill="#000"/></svg>
<div class="t" style="left:464px;top:158.84px;font-size:12px;font-weight:bold;color:#111;letter-spacing:-0.432px;">10200 Reinhard Berger</div>
<div class="t" style="left:828px;width:95px;text-align:right;top:159.20000000000002px;font-weight:bold;color:#111;">363,67</div>
<div style="position:absolute;left:399px;top:182px;width:27.5px;height:25px;background:#e8e9ec;"></div>
<div style="position:absolute;left:399px;top:207px;width:984px;height:1px;background:#dedede;"></div>
<div style="position:absolute;left:427px;top:181px;width:1px;height:27px;background:#dedede;"></div>
<div style="position:absolute;left:457px;top:181px;width:1px;height:27px;background:#dedede;"></div>
<div style="position:absolute;left:487px;top:181px;width:1px;height:27px;background:#dedede;"></div>
<div style="position:absolute;left:587px;top:181px;width:1px;height:27px;background:#dedede;"></div>
<div style="position:absolute;left:667px;top:181px;width:1px;height:27px;background:#dedede;"></div>
<div style="position:absolute;left:747px;top:181px;width:1px;height:27px;background:#dedede;"></div>
<div style="position:absolute;left:827px;top:181px;width:1px;height:27px;background:#dedede;"></div>
<div style="position:absolute;left:927px;top:181px;width:1px;height:27px;background:#dedede;"></div>
<div style="position:absolute;left:1077px;top:181px;width:1px;height:27px;background:#dedede;"></div>
<div style="position:absolute;left:1177px;top:181px;width:1px;height:27px;background:#dedede;"></div>
<div style="position:absolute;left:1277px;top:181px;width:1px;height:27px;background:#dedede;"></div>
<div style="position:absolute;left:1357px;top:181px;width:1px;height:27px;background:#dedede;"></div>
<div style="position:absolute;left:428.5px;top:182px;width:27.5px;height:24px;background:#a7d3ef;"></div>
<div style="position:absolute;left:458.5px;top:182px;width:27.5px;height:24px;background:#a7d3ef;"></div>
<div style="position:absolute;left:488.5px;top:182px;width:97.5px;height:24px;background:#a7d3ef;"></div>
<div style="position:absolute;left:588.5px;top:182px;width:77.5px;height:24px;background:#a7d3ef;"></div>
<div style="position:absolute;left:668.5px;top:182px;width:77.5px;height:24px;background:#a7d3ef;"></div>
<div style="position:absolute;left:748.5px;top:182px;width:77.5px;height:24px;background:#a7d3ef;"></div>
<div style="position:absolute;left:828.5px;top:182px;width:97.5px;height:24px;background:#a7d3ef;"></div>
<div style="position:absolute;left:928.5px;top:182px;width:147.5px;height:24px;background:#a7d3ef;"></div>
<div style="position:absolute;left:1078.5px;top:182px;width:97.5px;height:24px;background:#a7d3ef;"></div>
<div style="position:absolute;left:1178.5px;top:182px;width:97.5px;height:24px;background:#a7d3ef;"></div>
<div style="position:absolute;left:1278.5px;top:182px;width:77.5px;height:24px;background:#a7d3ef;"></div>
<div style="position:absolute;left:1358.5px;top:182px;width:22.5px;height:24px;background:#a7d3ef;"></div>
<svg style="position:absolute;left:404.3px;top:187.2px" width="16.8" height="13.8" viewBox="0 0 16.8 13.8"><rect x="1.6" y="1.6" width="10.600000000000001" height="10.600000000000001" rx="2" fill="#fff" stroke="#6c6c6c" stroke-width="1.2"/><path d="M3.4 6.2 L6.8 9.6 L14 2.6" stroke="#666" stroke-width="2.6" fill="none" stroke-linecap="round" stroke-linejoin="round"/></svg>
<div class="t" style="left:491.3px;top:187.84px;font-size:12px;color:#1e1e1e;letter-spacing:-0.422px;">970</div>
<div class="t" style="left:591.2px;top:187.84px;font-size:12px;color:#1e1e1e;letter-spacing:-0.407px;">01.06.2018</div>
<div class="t" style="left:671.2px;top:187.84px;font-size:12px;color:#1e1e1e;letter-spacing:-0.407px;">01.06.2018</div>
<div class="t" style="left:828px;width:95.8px;text-align:right;top:188px;color:#111;">-213,22</div>
<div style="position:absolute;left:399px;top:209px;width:27.5px;height:25px;background:#e8e9ec;"></div>
<div style="position:absolute;left:399px;top:234px;width:984px;height:1px;background:#dedede;"></div>
<div style="position:absolute;left:427px;top:208px;width:1px;height:27px;background:#dedede;"></div>
<div style="position:absolute;left:457px;top:208px;width:1px;height:27px;background:#dedede;"></div>
<div style="position:absolute;left:487px;top:208px;width:1px;height:27px;background:#dedede;"></div>
<div style="position:absolute;left:587px;top:208px;width:1px;height:27px;background:#dedede;"></div>
<div style="position:absolute;left:667px;top:208px;width:1px;height:27px;background:#dedede;"></div>
<div style="position:absolute;left:747px;top:208px;width:1px;height:27px;background:#dedede;"></div>
<div style="position:absolute;left:827px;top:208px;width:1px;height:27px;background:#dedede;"></div>
<div style="position:absolute;left:927px;top:208px;width:1px;height:27px;background:#dedede;"></div>
<div style="position:absolute;left:1077px;top:208px;width:1px;height:27px;background:#dedede;"></div>
<div style="position:absolute;left:1177px;top:208px;width:1px;height:27px;background:#dedede;"></div>
<div style="position:absolute;left:1277px;top:208px;width:1px;height:27px;background:#dedede;"></div>
<div style="position:absolute;left:1357px;top:208px;width:1px;height:27px;background:#dedede;"></div>
<svg style="position:absolute;left:404.3px;top:214.2px" width="16.8" height="13.8" viewBox="0 0 16.8 13.8"><rect x="1.6" y="1.6" width="10.600000000000001" height="10.600000000000001" rx="2" fill="#fff" stroke="#6c6c6c" stroke-width="1.2"/></svg>
<div class="t" style="left:491.3px;top:214.84px;font-size:12px;color:#1e1e1e;letter-spacing:-0.359px;">1147</div>
<div class="t" style="left:591.2px;top:214.84px;font-size:12px;color:#1e1e1e;letter-spacing:-0.407px;">03.07.2018</div>
<div class="t" style="left:671.2px;top:214.84px;font-size:12px;color:#1e1e1e;letter-spacing:-0.407px;">03.07.2018</div>
<div class="t" style="left:828px;width:95.8px;text-align:right;top:215px;color:#111;">-10,50</div>
<div style="position:absolute;left:399px;top:236px;width:27.5px;height:25px;background:#e8e9ec;"></div>
<div style="position:absolute;left:399px;top:261px;width:984px;height:1px;background:#dedede;"></div>
<div style="position:absolute;left:427px;top:235px;width:1px;height:27px;background:#dedede;"></div>
<div style="position:absolute;left:457px;top:235px;width:1px;height:27px;background:#dedede;"></div>
<div style="position:absolute;left:487px;top:235px;width:1px;height:27px;background:#dedede;"></div>
<div style="position:absolute;left:587px;top:235px;width:1px;height:27px;background:#dedede;"></div>
<div style="position:absolute;left:667px;top:235px;width:1px;height:27px;background:#dedede;"></div>
<div style="position:absolute;left:747px;top:235px;width:1px;height:27px;background:#dedede;"></div>
<div style="position:absolute;left:827px;top:235px;width:1px;height:27px;background:#dedede;"></div>
<div style="position:absolute;left:927px;top:235px;width:1px;height:27px;background:#dedede;"></div>
<div style="position:absolute;left:1077px;top:235px;width:1px;height:27px;background:#dedede;"></div>
<div style="position:absolute;left:1177px;top:235px;width:1px;height:27px;background:#dedede;"></div>
<div style="position:absolute;left:1277px;top:235px;width:1px;height:27px;background:#dedede;"></div>
<div style="position:absolute;left:1357px;top:235px;width:1px;height:27px;background:#dedede;"></div>
<svg style="position:absolute;left:404.3px;top:241.2px" width="16.8" height="13.8" viewBox="0 0 16.8 13.8"><rect x="1.6" y="1.6" width="10.600000000000001" height="10.600000000000001" rx="2" fill="#fff" stroke="#6c6c6c" stroke-width="1.2"/></svg>
<div class="t" style="left:491.3px;top:241.84px;font-size:12px;color:#1e1e1e;letter-spacing:-0.359px;">1148</div>
<div class="t" style="left:591.2px;top:241.84px;font-size:12px;color:#1e1e1e;letter-spacing:-0.407px;">03.07.2018</div>
<div class="t" style="left:671.2px;top:241.84px;font-size:12px;color:#1e1e1e;letter-spacing:-0.407px;">03.07.2018</div>
<div class="t" style="left:828px;width:95.8px;text-align:right;top:242px;color:#111;">-353,17</div>
<div style="position:absolute;left:399px;top:263px;width:27.5px;height:25px;background:#e8e9ec;"></div>
<div style="position:absolute;left:399px;top:288px;width:984px;height:1px;background:#dedede;"></div>
<div style="position:absolute;left:427px;top:262px;width:1px;height:27px;background:#dedede;"></div>
<div style="position:absolute;left:457px;top:262px;width:1px;height:27px;background:#dedede;"></div>
<div style="position:absolute;left:487px;top:262px;width:1px;height:27px;background:#dedede;"></div>
<div style="position:absolute;left:587px;top:262px;width:1px;height:27px;background:#dedede;"></div>
<div style="position:absolute;left:667px;top:262px;width:1px;height:27px;background:#dedede;"></div>
<div style="position:absolute;left:747px;top:262px;width:1px;height:27px;background:#dedede;"></div>
<div style="position:absolute;left:827px;top:262px;width:1px;height:27px;background:#dedede;"></div>
<div style="position:absolute;left:927px;top:262px;width:1px;height:27px;background:#dedede;"></div>
<div style="position:absolute;left:1077px;top:262px;width:1px;height:27px;background:#dedede;"></div>
<div style="position:absolute;left:1177px;top:262px;width:1px;height:27px;background:#dedede;"></div>
<div style="position:absolute;left:1277px;top:262px;width:1px;height:27px;background:#dedede;"></div>
<div style="position:absolute;left:1357px;top:262px;width:1px;height:27px;background:#dedede;"></div>
<svg style="position:absolute;left:404.3px;top:268.2px" width="16.8" height="13.8" viewBox="0 0 16.8 13.8"><rect x="1.6" y="1.6" width="10.600000000000001" height="10.600000000000001" rx="2" fill="#fff" stroke="#6c6c6c" stroke-width="1.2"/></svg>
<div class="t" style="left:491.3px;top:268.84px;font-size:12px;color:#1e1e1e;letter-spacing:-0.359px;">1175</div>
<div class="t" style="left:591.2px;top:268.84px;font-size:12px;color:#1e1e1e;letter-spacing:-0.407px;">07.07.2018</div>
<div class="t" style="left:671.2px;top:268.84px;font-size:12px;color:#1e1e1e;letter-spacing:-0.407px;">07.07.2018</div>
<div class="t" style="left:828px;width:95.8px;text-align:right;top:269px;color:#111;">-58,50</div>
<div style="position:absolute;left:399px;top:290px;width:27.5px;height:25px;background:#e8e9ec;"></div>
<div style="position:absolute;left:399px;top:315px;width:984px;height:1px;background:#dedede;"></div>
<div style="position:absolute;left:427px;top:289px;width:1px;height:27px;background:#dedede;"></div>
<div style="position:absolute;left:457px;top:289px;width:1px;height:27px;background:#dedede;"></div>
<div style="position:absolute;left:487px;top:289px;width:1px;height:27px;background:#dedede;"></div>
<div style="position:absolute;left:587px;top:289px;width:1px;height:27px;background:#dedede;"></div>
<div style="position:absolute;left:667px;top:289px;width:1px;height:27px;background:#dedede;"></div>
<div style="position:absolute;left:747px;top:289px;width:1px;height:27px;background:#dedede;"></div>
<div style="position:absolute;left:827px;top:289px;width:1px;height:27px;background:#dedede;"></div>
<div style="position:absolute;left:927px;top:289px;width:1px;height:27px;background:#dedede;"></div>
<div style="position:absolute;left:1077px;top:289px;width:1px;height:27px;background:#dedede;"></div>
<div style="position:absolute;left:1177px;top:289px;width:1px;height:27px;background:#dedede;"></div>
<div style="position:absolute;left:1277px;top:289px;width:1px;height:27px;background:#dedede;"></div>
<div style="position:absolute;left:1357px;top:289px;width:1px;height:27px;background:#dedede;"></div>
<svg style="position:absolute;left:404.3px;top:295.2px" width="16.8" height="13.8" viewBox="0 0 16.8 13.8"><rect x="1.6" y="1.6" width="10.600000000000001" height="10.600000000000001" rx="2" fill="#fff" stroke="#6c6c6c" stroke-width="1.2"/></svg>
<div class="t" style="left:491.3px;top:295.84px;font-size:12px;color:#1e1e1e;letter-spacing:-0.312px;">20061136</div>
<div class="t" style="left:591.2px;top:295.84px;font-size:12px;color:#1e1e1e;letter-spacing:-0.407px;">31.05.2019</div>
<div class="t" style="left:671.2px;top:295.84px;font-size:12px;color:#1e1e1e;letter-spacing:-0.407px;">30.06.2019</div>
<div class="t" style="left:828px;width:95.8px;text-align:right;top:296px;color:#111;">213,22</div>
<div style="position:absolute;left:399px;top:317px;width:27.5px;height:25px;background:#e8e9ec;"></div>
<div style="position:absolute;left:399px;top:342px;width:984px;height:1px;background:#dedede;"></div>
<div style="position:absolute;left:427px;top:316px;width:1px;height:27px;background:#dedede;"></div>
<div style="position:absolute;left:457px;top:316px;width:1px;height:27px;background:#dedede;"></div>
<div style="position:absolute;left:487px;top:316px;width:1px;height:27px;background:#dedede;"></div>
<div style="position:absolute;left:587px;top:316px;width:1px;height:27px;background:#dedede;"></div>
<div style="position:absolute;left:667px;top:316px;width:1px;height:27px;background:#dedede;"></div>
<div style="position:absolute;left:747px;top:316px;width:1px;height:27px;background:#dedede;"></div>
<div style="position:absolute;left:827px;top:316px;width:1px;height:27px;background:#dedede;"></div>
<div style="position:absolute;left:927px;top:316px;width:1px;height:27px;background:#dedede;"></div>
<div style="position:absolute;left:1077px;top:316px;width:1px;height:27px;background:#dedede;"></div>
<div style="position:absolute;left:1177px;top:316px;width:1px;height:27px;background:#dedede;"></div>
<div style="position:absolute;left:1277px;top:316px;width:1px;height:27px;background:#dedede;"></div>
<div style="position:absolute;left:1357px;top:316px;width:1px;height:27px;background:#dedede;"></div>
<svg style="position:absolute;left:404.3px;top:322.2px" width="16.8" height="13.8" viewBox="0 0 16.8 13.8"><rect x="1.6" y="1.6" width="10.600000000000001" height="10.600000000000001" rx="2" fill="#fff" stroke="#6c6c6c" stroke-width="1.2"/></svg>
<div class="t" style="left:491.3px;top:322.84px;font-size:12px;color:#1e1e1e;letter-spacing:-0.325px;">061158</div>
<div class="t" style="left:591.2px;top:322.84px;font-size:12px;color:#1e1e1e;letter-spacing:-0.407px;">30.06.2019</div>
<div class="t" style="left:671.2px;top:322.84px;font-size:12px;color:#1e1e1e;letter-spacing:-0.407px;">30.07.2019</div>
<div class="t" style="left:828px;width:95.8px;text-align:right;top:323px;color:#111;">353,17</div>
<div style="position:absolute;left:399px;top:344px;width:27.5px;height:25px;background:#e8e9ec;"></div>
<div style="position:absolute;left:399px;top:369px;width:984px;height:1px;background:#dedede;"></div>
<div style="position:absolute;left:427px;top:343px;width:1px;height:27px;background:#dedede;"></div>
<div style="position:absolute;left:457px;top:343px;width:1px;height:27px;background:#dedede;"></div>
<div style="position:absolute;left:487px;top:343px;width:1px;height:27px;background:#dedede;"></div>
<div style="position:absolute;left:587px;top:343px;width:1px;height:27px;background:#dedede;"></div>
<div style="position:absolute;left:667px;top:343px;width:1px;height:27px;background:#dedede;"></div>
<div style="position:absolute;left:747px;top:343px;width:1px;height:27px;background:#dedede;"></div>
<div style="position:absolute;left:827px;top:343px;width:1px;height:27px;background:#dedede;"></div>
<div style="position:absolute;left:927px;top:343px;width:1px;height:27px;background:#dedede;"></div>
<div style="position:absolute;left:1077px;top:343px;width:1px;height:27px;background:#dedede;"></div>
<div style="position:absolute;left:1177px;top:343px;width:1px;height:27px;background:#dedede;"></div>
<div style="position:absolute;left:1277px;top:343px;width:1px;height:27px;background:#dedede;"></div>
<div style="position:absolute;left:1357px;top:343px;width:1px;height:27px;background:#dedede;"></div>
<svg style="position:absolute;left:404.3px;top:349.2px" width="16.8" height="13.8" viewBox="0 0 16.8 13.8"><rect x="1.6" y="1.6" width="10.600000000000001" height="10.600000000000001" rx="2" fill="#fff" stroke="#6c6c6c" stroke-width="1.2"/></svg>
<div class="t" style="left:491.3px;top:349.84px;font-size:12px;color:#1e1e1e;letter-spacing:-0.325px;">061159</div>
<div class="t" style="left:591.2px;top:349.84px;font-size:12px;color:#1e1e1e;letter-spacing:-0.407px;">30.06.2019</div>
<div class="t" style="left:671.2px;top:349.84px;font-size:12px;color:#1e1e1e;letter-spacing:-0.407px;">30.07.2019</div>
<div class="t" style="left:828px;width:95.8px;text-align:right;top:350px;color:#111;">10,50</div>
<div style="position:absolute;left:399px;top:371px;width:27.5px;height:25px;background:#e8e9ec;"></div>
<div style="position:absolute;left:399px;top:396px;width:984px;height:1px;background:#dedede;"></div>
<div style="position:absolute;left:427px;top:370px;width:1px;height:27px;background:#dedede;"></div>
<div style="position:absolute;left:457px;top:370px;width:1px;height:27px;background:#dedede;"></div>
<div style="position:absolute;left:487px;top:370px;width:1px;height:27px;background:#dedede;"></div>
<div style="position:absolute;left:587px;top:370px;width:1px;height:27px;background:#dedede;"></div>
<div style="position:absolute;left:667px;top:370px;width:1px;height:27px;background:#dedede;"></div>
<div style="position:absolute;left:747px;top:370px;width:1px;height:27px;background:#dedede;"></div>
<div style="position:absolute;left:827px;top:370px;width:1px;height:27px;background:#dedede;"></div>
<div style="position:absolute;left:927px;top:370px;width:1px;height:27px;background:#dedede;"></div>
<div style="position:absolute;left:1077px;top:370px;width:1px;height:27px;background:#dedede;"></div>
<div style="position:absolute;left:1177px;top:370px;width:1px;height:27px;background:#dedede;"></div>
<div style="position:absolute;left:1277px;top:370px;width:1px;height:27px;background:#dedede;"></div>
<div style="position:absolute;left:1357px;top:370px;width:1px;height:27px;background:#dedede;"></div>
<svg style="position:absolute;left:404.3px;top:376.2px" width="16.8" height="13.8" viewBox="0 0 16.8 13.8"><rect x="1.6" y="1.6" width="10.600000000000001" height="10.600000000000001" rx="2" fill="#fff" stroke="#6c6c6c" stroke-width="1.2"/></svg>
<div class="t" style="left:491.3px;top:376.84px;font-size:12px;color:#1e1e1e;letter-spacing:-0.336px;">09112</div>
<div class="t" style="left:591.2px;top:376.84px;font-size:12px;color:#1e1e1e;letter-spacing:-0.407px;">30.06.2019</div>
<div class="t" style="left:671.2px;top:376.84px;font-size:12px;color:#1e1e1e;letter-spacing:-0.407px;">30.07.2019</div>
<div class="t" style="left:828px;width:95.8px;text-align:right;top:377px;color:#111;">353,17</div>
<div style="position:absolute;left:399px;top:398px;width:27.5px;height:25px;background:#e8e9ec;"></div>
<div style="position:absolute;left:399px;top:423px;width:984px;height:1px;background:#dedede;"></div>
<div style="position:absolute;left:427px;top:397px;width:1px;height:27px;background:#dedede;"></div>
<div style="position:absolute;left:457px;top:397px;width:1px;height:27px;background:#dedede;"></div>
<div style="position:absolute;left:487px;top:397px;width:1px;height:27px;background:#dedede;"></div>
<div style="position:absolute;left:587px;top:397px;width:1px;height:27px;background:#dedede;"></div>
<div style="position:absolute;left:667px;top:397px;width:1px;height:27px;background:#dedede;"></div>
<div style="position:absolute;left:747px;top:397px;width:1px;height:27px;background:#dedede;"></div>
<div style="position:absolute;left:827px;top:397px;width:1px;height:27px;background:#dedede;"></div>
<div style="position:absolute;left:927px;top:397px;width:1px;height:27px;background:#dedede;"></div>
<div style="position:absolute;left:1077px;top:397px;width:1px;height:27px;background:#dedede;"></div>
<div style="position:absolute;left:1177px;top:397px;width:1px;height:27px;background:#dedede;"></div>
<div style="position:absolute;left:1277px;top:397px;width:1px;height:27px;background:#dedede;"></div>
<div style="position:absolute;left:1357px;top:397px;width:1px;height:27px;background:#dedede;"></div>
<svg style="position:absolute;left:404.3px;top:403.2px" width="16.8" height="13.8" viewBox="0 0 16.8 13.8"><rect x="1.6" y="1.6" width="10.600000000000001" height="10.600000000000001" rx="2" fill="#fff" stroke="#6c6c6c" stroke-width="1.2"/></svg>
<div class="t" style="left:491.3px;top:403.84px;font-size:12px;color:#1e1e1e;letter-spacing:-0.336px;">09113</div>
<div class="t" style="left:591.2px;top:403.84px;font-size:12px;color:#1e1e1e;letter-spacing:-0.407px;">30.06.2019</div>
<div class="t" style="left:671.2px;top:403.84px;font-size:12px;color:#1e1e1e;letter-spacing:-0.407px;">30.07.2019</div>
<div class="t" style="left:828px;width:95.8px;text-align:right;top:404px;color:#111;">10,50</div>
<div style="position:absolute;left:399px;top:425px;width:27.5px;height:25px;background:#e8e9ec;"></div>
<div style="position:absolute;left:399px;top:450px;width:984px;height:1px;background:#dedede;"></div>
<div style="position:absolute;left:427px;top:424px;width:1px;height:27px;background:#dedede;"></div>
<div style="position:absolute;left:457px;top:424px;width:1px;height:27px;background:#dedede;"></div>
<div style="position:absolute;left:487px;top:424px;width:1px;height:27px;background:#dedede;"></div>
<div style="position:absolute;left:587px;top:424px;width:1px;height:27px;background:#dedede;"></div>
<div style="position:absolute;left:667px;top:424px;width:1px;height:27px;background:#dedede;"></div>
<div style="position:absolute;left:747px;top:424px;width:1px;height:27px;background:#dedede;"></div>
<div style="position:absolute;left:827px;top:424px;width:1px;height:27px;background:#dedede;"></div>
<div style="position:absolute;left:927px;top:424px;width:1px;height:27px;background:#dedede;"></div>
<div style="position:absolute;left:1077px;top:424px;width:1px;height:27px;background:#dedede;"></div>
<div style="position:absolute;left:1177px;top:424px;width:1px;height:27px;background:#dedede;"></div>
<div style="position:absolute;left:1277px;top:424px;width:1px;height:27px;background:#dedede;"></div>
<div style="position:absolute;left:1357px;top:424px;width:1px;height:27px;background:#dedede;"></div>
<svg style="position:absolute;left:404.3px;top:430.2px" width="16.8" height="13.8" viewBox="0 0 16.8 13.8"><rect x="1.6" y="1.6" width="10.600000000000001" height="10.600000000000001" rx="2" fill="#fff" stroke="#6c6c6c" stroke-width="1.2"/></svg>
<div class="t" style="left:491.3px;top:430.84px;font-size:12px;color:#1e1e1e;letter-spacing:-0.325px;">061153</div>
<div class="t" style="left:591.2px;top:430.84px;font-size:12px;color:#1e1e1e;letter-spacing:-0.407px;">02.07.2019</div>
<div class="t" style="left:671.2px;top:430.84px;font-size:12px;color:#1e1e1e;letter-spacing:-0.407px;">01.08.2019</div>
<div class="t" style="left:828px;width:95.8px;text-align:right;top:431px;color:#111;">58,50</div>
<div style="position:absolute;left:399px;top:450.5px;width:984px;height:1.5px;background:#6f7072;"></div>
<div style="position:absolute;left:399px;top:452px;width:984px;height:31.5px;background:#ebebeb;"></div>
<svg style="position:absolute;left:404px;top:464.5px" width="7" height="6" viewBox="0 0 7 6"><path d="M7 0 V6 H0 Z" fill="#111"/></svg>
<div style="position:absolute;left:401.2px;top:454px;width:15.6px;height:28px;box-sizing:border-box;border:1px dotted #444;"></div>
<div style="position:absolute;left:431.3px;top:457.3px;width:25.5px;height:21.5px;box-sizing:border-box;border:1px solid #7a7a7a;border-radius:3px;background:#f1f1f1;"></div>
<svg style="position:absolute;left:436.5px;top:461.5px" width="14" height="14" viewBox="0 0 14 14"><path d="M7 0.5 L13.5 4 V5 H0.5 V4 Z" fill="#000"/><rect x="1" y="5.8" width="12" height="1.2" fill="#000"/><rect x="2" y="7" width="1.8" height="4" fill="#000"/><rect x="5" y="7" width="1.8" height="4" fill="#000"/><rect x="7.8" y="7" width="1.8" height="4" fill="#000"/><rect x="10.6" y="7" width="1.8" height="4" fill="#000"/><rect x="1" y="11.2" width="12" height="1.2" fill="#000"/><rect x="0.3" y="12.6" width="13.4" height="1.4" fill="#000"/></svg>
<div class="t" style="left:464px;top:461.94px;font-size:12px;font-weight:bold;color:#111;letter-spacing:-0.268px;">10202 Büntner Metzgerei</div>
<div class="t" style="left:828px;width:95px;text-align:right;top:462.3px;font-weight:bold;color:#111;">486,45</div>
<div style="position:absolute;left:399px;top:485px;width:27.5px;height:25px;background:#e8e9ec;"></div>
<div style="position:absolute;left:399px;top:510px;width:984px;height:1px;background:#dedede;"></div>
<div style="position:absolute;left:427px;top:484px;width:1px;height:27px;background:#dedede;"></div>
<div style="position:absolute;left:457px;top:484px;width:1px;height:27px;background:#dedede;"></div>
<div style="position:absolute;left:487px;top:484px;width:1px;height:27px;background:#dedede;"></div>
<div style="position:absolute;left:587px;top:484px;width:1px;height:27px;background:#dedede;"></div>
<div style="position:absolute;left:667px;top:484px;width:1px;height:27px;background:#dedede;"></div>
<div style="position:absolute;left:747px;top:484px;width:1px;height:27px;background:#dedede;"></div>
<div style="position:absolute;left:827px;top:484px;width:1px;height:27px;background:#dedede;"></div>
<div style="position:absolute;left:927px;top:484px;width:1px;height:27px;background:#dedede;"></div>
<div style="position:absolute;left:1077px;top:484px;width:1px;height:27px;background:#dedede;"></div>
<div style="position:absolute;left:1177px;top:484px;width:1px;height:27px;background:#dedede;"></div>
<div style="position:absolute;left:1277px;top:484px;width:1px;height:27px;background:#dedede;"></div>
<div style="position:absolute;left:1357px;top:484px;width:1px;height:27px;background:#dedede;"></div>
<svg style="position:absolute;left:404.3px;top:490.2px" width="16.8" height="13.8" viewBox="0 0 16.8 13.8"><rect x="1.6" y="1.6" width="10.600000000000001" height="10.600000000000001" rx="2" fill="#fff" stroke="#6c6c6c" stroke-width="1.2"/></svg>
<div class="t" style="left:491.3px;top:490.84px;font-size:12px;color:#1e1e1e;letter-spacing:-0.370px;">1913</div>
<div class="t" style="left:591.2px;top:490.84px;font-size:12px;color:#1e1e1e;letter-spacing:-0.407px;">31.12.2014</div>
<div class="t" style="left:671.2px;top:490.84px;font-size:12px;color:#1e1e1e;letter-spacing:-0.407px;">31.12.2014</div>
<div class="t" style="left:828px;width:95.8px;text-align:right;top:491px;color:#111;">-403,56</div>
<div style="position:absolute;left:399px;top:512px;width:27.5px;height:25px;background:#e8e9ec;"></div>
<div style="position:absolute;left:399px;top:537px;width:984px;height:1px;background:#dedede;"></div>
<div style="position:absolute;left:427px;top:511px;width:1px;height:27px;background:#dedede;"></div>
<div style="position:absolute;left:457px;top:511px;width:1px;height:27px;background:#dedede;"></div>
<div style="position:absolute;left:487px;top:511px;width:1px;height:27px;background:#dedede;"></div>
<div style="position:absolute;left:587px;top:511px;width:1px;height:27px;background:#dedede;"></div>
<div style="position:absolute;left:667px;top:511px;width:1px;height:27px;background:#dedede;"></div>
<div style="position:absolute;left:747px;top:511px;width:1px;height:27px;background:#dedede;"></div>
<div style="position:absolute;left:827px;top:511px;width:1px;height:27px;background:#dedede;"></div>
<div style="position:absolute;left:927px;top:511px;width:1px;height:27px;background:#dedede;"></div>
<div style="position:absolute;left:1077px;top:511px;width:1px;height:27px;background:#dedede;"></div>
<div style="position:absolute;left:1177px;top:511px;width:1px;height:27px;background:#dedede;"></div>
<div style="position:absolute;left:1277px;top:511px;width:1px;height:27px;background:#dedede;"></div>
<div style="position:absolute;left:1357px;top:511px;width:1px;height:27px;background:#dedede;"></div>
<svg style="position:absolute;left:404.3px;top:517.2px" width="16.8" height="13.8" viewBox="0 0 16.8 13.8"><rect x="1.6" y="1.6" width="10.600000000000001" height="10.600000000000001" rx="2" fill="#fff" stroke="#6c6c6c" stroke-width="1.2"/></svg>
<div class="t" style="left:491.3px;top:517.84px;font-size:12px;color:#1e1e1e;letter-spacing:-0.422px;">292</div>
<div class="t" style="left:591.2px;top:517.84px;font-size:12px;color:#1e1e1e;letter-spacing:-0.407px;">19.02.2015</div>
<div class="t" style="left:671.2px;top:517.84px;font-size:12px;color:#1e1e1e;letter-spacing:-0.407px;">19.02.2015</div>
<div class="t" style="left:828px;width:95.8px;text-align:right;top:518px;color:#111;">-178,20</div>
<div style="position:absolute;left:399px;top:539px;width:27.5px;height:25px;background:#e8e9ec;"></div>
<div style="position:absolute;left:399px;top:564px;width:984px;height:1px;background:#dedede;"></div>
<div style="position:absolute;left:427px;top:538px;width:1px;height:27px;background:#dedede;"></div>
<div style="position:absolute;left:457px;top:538px;width:1px;height:27px;background:#dedede;"></div>
<div style="position:absolute;left:487px;top:538px;width:1px;height:27px;background:#dedede;"></div>
<div style="position:absolute;left:587px;top:538px;width:1px;height:27px;background:#dedede;"></div>
<div style="position:absolute;left:667px;top:538px;width:1px;height:27px;background:#dedede;"></div>
<div style="position:absolute;left:747px;top:538px;width:1px;height:27px;background:#dedede;"></div>
<div style="position:absolute;left:827px;top:538px;width:1px;height:27px;background:#dedede;"></div>
<div style="position:absolute;left:927px;top:538px;width:1px;height:27px;background:#dedede;"></div>
<div style="position:absolute;left:1077px;top:538px;width:1px;height:27px;background:#dedede;"></div>
<div style="position:absolute;left:1177px;top:538px;width:1px;height:27px;background:#dedede;"></div>
<div style="position:absolute;left:1277px;top:538px;width:1px;height:27px;background:#dedede;"></div>
<div style="position:absolute;left:1357px;top:538px;width:1px;height:27px;background:#dedede;"></div>
<svg style="position:absolute;left:404.3px;top:544.2px" width="16.8" height="13.8" viewBox="0 0 16.8 13.8"><rect x="1.6" y="1.6" width="10.600000000000001" height="10.600000000000001" rx="2" fill="#fff" stroke="#6c6c6c" stroke-width="1.2"/></svg>
<div class="t" style="left:491.3px;top:544.84px;font-size:12px;color:#1e1e1e;letter-spacing:-0.334px;">061055</div>
<div class="t" style="left:591.2px;top:544.84px;font-size:12px;color:#1e1e1e;letter-spacing:-0.407px;">05.09.2015</div>
<div class="t" style="left:671.2px;top:544.84px;font-size:12px;color:#1e1e1e;letter-spacing:-0.407px;">05.10.2015</div>
<div class="t" style="left:828px;width:95.8px;text-align:right;top:545px;color:#111;">201,78</div>
<div style="position:absolute;left:399px;top:566px;width:27.5px;height:3px;background:#e8e9ec;"></div>
<div style="position:absolute;left:427px;top:565px;width:1px;height:4px;background:#dedede;"></div>
<div style="position:absolute;left:457px;top:565px;width:1px;height:4px;background:#dedede;"></div>
<div style="position:absolute;left:487px;top:565px;width:1px;height:4px;background:#dedede;"></div>
<div style="position:absolute;left:587px;top:565px;width:1px;height:4px;background:#dedede;"></div>
<div style="position:absolute;left:667px;top:565px;width:1px;height:4px;background:#dedede;"></div>
<div style="position:absolute;left:747px;top:565px;width:1px;height:4px;background:#dedede;"></div>
<div style="position:absolute;left:827px;top:565px;width:1px;height:4px;background:#dedede;"></div>
<div style="position:absolute;left:927px;top:565px;width:1px;height:4px;background:#dedede;"></div>
<div style="position:absolute;left:1077px;top:565px;width:1px;height:4px;background:#dedede;"></div>
<div style="position:absolute;left:1177px;top:565px;width:1px;height:4px;background:#dedede;"></div>
<div style="position:absolute;left:1277px;top:565px;width:1px;height:4px;background:#dedede;"></div>
<div style="position:absolute;left:1357px;top:565px;width:1px;height:4px;background:#dedede;"></div>
<div style="position:absolute;left:1383px;top:148.5px;width:17px;height:420.5px;background:#dcdde0;"></div>
<div style="position:absolute;left:1383px;top:165px;width:17px;height:130.5px;background:#a5a6a9;"></div>
<svg style="position:absolute;left:1387px;top:153px" width="9" height="6" viewBox="0 0 9 6"><path d="M0.8 5.2 L4.5 1.2 L8.2 5.2" stroke="#555" stroke-width="1.6" fill="none"/></svg>
<svg style="position:absolute;left:1387px;top:558px" width="9" height="6" viewBox="0 0 9 6"><path d="M0.8 0.8 L4.5 4.8 L8.2 0.8" stroke="#555" stroke-width="1.6" fill="none"/></svg>
<div style="position:absolute;left:399px;top:569px;width:29px;height:17.5px;background:#fff;"></div>
<div style="position:absolute;left:428px;top:569px;width:955px;height:17.5px;background:#dcdde0;"></div>
<div style="position:absolute;left:445px;top:569px;width:700px;height:17.5px;background:#a5a6a9;"></div>
<div style="position:absolute;left:1383px;top:569px;width:17px;height:17.5px;background:#fff;"></div>
<svg style="position:absolute;left:433px;top:573px" width="6" height="9" viewBox="0 0 6 9"><path d="M5.2 0.8 L1.2 4.5 L5.2 8.2" stroke="#555" stroke-width="1.6" fill="none"/></svg>
<svg style="position:absolute;left:1372px;top:573px" width="6" height="9" viewBox="0 0 6 9"><path d="M0.8 0.8 L4.8 4.5 L0.8 8.2" stroke="#555" stroke-width="1.6" fill="none"/></svg>
<div style="position:absolute;left:398px;top:591px;width:1003px;height:25.5px;box-sizing:border-box;border:1px solid #dadada;background:#ececec;"></div>
<div class="t" style="left:431.5px;top:595.84px;font-size:12px;font-weight:bold;color:#111;letter-spacing:-0.789px;">Summe:</div>
<div class="t" style="left:828px;width:95px;text-align:right;top:597.7px;color:#111;">173.757,52</div>
<div class="t" style="left:1078px;width:95px;text-align:right;top:597.7px;color:#111;">0,00</div>
<div class="t" style="left:1178px;width:95px;text-align:right;top:597.7px;color:#111;">0,00</div>
<div style="position:absolute;left:398px;top:621px;width:1003px;height:31.5px;box-sizing:border-box;border:1px solid #dadada;background:#fff;"></div>
<div style="position:absolute;left:403px;top:626px;width:21.5px;height:21.5px;box-sizing:border-box;border:1px solid #9a9a9a;border-radius:3px;background:#dcdde0;"></div>
<svg style="position:absolute;left:408.7px;top:629.9px" width="11" height="14" viewBox="0 0 11 14"><rect x="0" y="0" width="2.9" height="13.6" fill="#5a5a5a"/><path d="M10.7 0.6 V13 L3.6 6.8 Z" fill="#5a5a5a"/></svg>
<div style="position:absolute;left:429px;top:626px;width:21.5px;height:21.5px;box-sizing:border-box;border:1px solid #9a9a9a;border-radius:3px;background:#dcdde0;"></div>
<svg style="position:absolute;left:436.8px;top:631.2px" width="7" height="11" viewBox="0 0 7 11"><path d="M6.4 0 V11 L0 5.5 Z" fill="#5a5a5a"/></svg>
<div style="position:absolute;left:455px;top:626px;width:120.5px;height:21.5px;box-sizing:border-box;border:1px solid #8c8c8c;border-radius:3px;background:#fff;"></div>
<div class="t" style="left:458.3px;top:630.84px;font-size:12px;color:#1e1e1e;letter-spacing:-0.259px;">250 Datensätze</div>
<svg style="position:absolute;left:561px;top:634.5px" width="10" height="5" viewBox="0 0 10 5"><path d="M0 0 H10 L5 5 Z" fill="#000"/></svg>
<div class="t" style="left:871.5px;top:630.84px;font-size:12px;color:#1e1e1e;letter-spacing:-0.122px;">Datensatz 1 - 250 / 274, Seite 1 / 2</div>
<div style="position:absolute;left:1348px;top:626px;width:21.5px;height:21.5px;box-sizing:border-box;border:1px solid #8c8c8c;border-radius:3px;background:#fff;"></div>
<svg style="position:absolute;left:1355.8px;top:631px" width="6" height="11" viewBox="0 0 6 11"><path d="M0 0 V11 L5.8 5.5 Z" fill="#000"/></svg>
<div style="position:absolute;left:1374px;top:626px;width:21.5px;height:21.5px;box-sizing:border-box;border:1px solid #8c8c8c;border-radius:3px;background:#fff;"></div>
<svg style="position:absolute;left:1380px;top:628.9px" width="11" height="15" viewBox="0 0 11 15"><path d="M0 0 V15 L8 7.5 Z" fill="#000"/><rect x="7.6" y="0" width="2.6" height="15" fill="#000"/></svg>
<div style="position:absolute;left:393px;top:657px;width:113px;height:35px;box-sizing:border-box;border:1.3px solid #6f7072;border-top:none;background:#fff;"></div>
<div style="position:absolute;left:394.4px;top:655px;width:111px;height:3.5px;background:#fff;"></div>
<div style="position:absolute;left:505.5px;top:657px;width:123px;height:32.5px;box-sizing:border-box;border:1.3px solid #6f7072;background:#e9eaed;"></div>
<svg style="position:absolute;left:415px;top:666px" width="20" height="16" viewBox="0 0 20 16"><rect x="0" y="0.1" width="3" height="2.9" fill="#000"/><rect x="4.2" y="0.1" width="15.8" height="2.9" fill="#000"/><rect x="0" y="4.4" width="3" height="2.9" fill="#000"/><rect x="4.2" y="4.4" width="15.8" height="2.9" fill="#000"/><rect x="0" y="8.7" width="3" height="2.9" fill="#000"/><rect x="4.2" y="8.7" width="15.8" height="2.9" fill="#000"/><rect x="0" y="13.0" width="3" height="2.9" fill="#000"/><rect x="4.2" y="13.0" width="15.8" height="2.9" fill="#000"/></svg>
<div class="t" style="left:448.6px;top:668.64px;font-size:12px;color:#1e1e1e;letter-spacing:-0.555px;">Belege</div>
<svg style="position:absolute;left:524px;top:665px" width="17" height="17" viewBox="0 0 17 17"><rect x="0" y="0" width="17" height="17" rx="3" fill="#000"/><path d="M3.8 8.4 L7 11.6 L13.2 5.2" stroke="#fff" stroke-width="2.9" fill="none"/></svg>
<div class="t" style="left:554.6px;top:667.64px;font-size:12px;color:#1e1e1e;letter-spacing:-0.124px;">Prüfungen</div>
<div style="position:absolute;left:0px;top:0px;width:1440px;height:1px;background:#5c5d60;"></div>
<div style="position:absolute;left:0px;top:0px;width:1px;height:732px;background:#5c5d60;"></div>
<div style="position:absolute;left:1439px;top:0px;width:1px;height:732px;background:#5c5d60;"></div>
<div style="position:absolute;left:0px;top:731px;width:1440px;height:1px;background:#5c5d60;"></div>
</div>
</body></html>
